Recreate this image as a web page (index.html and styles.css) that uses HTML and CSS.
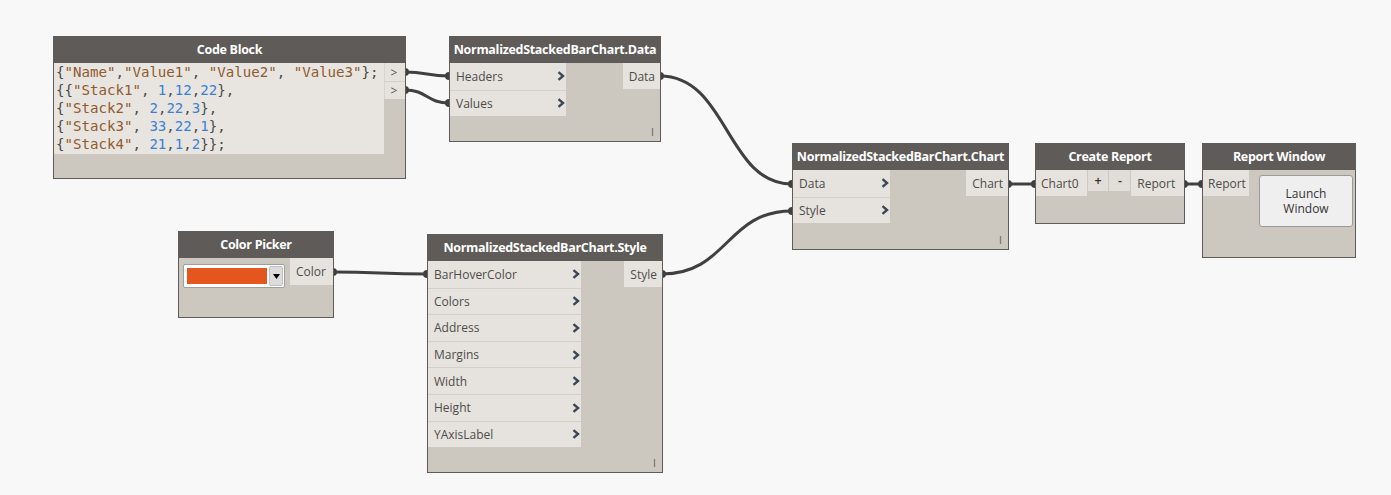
FILE: index.html
```html
<!DOCTYPE html>
<html>
<head>
<meta charset="utf-8">
<title>Dynamo graph</title>
<link rel="stylesheet" href="styles.css">
</head>
<body>
<div class="canvas">
  <svg class="wires" width="1391" height="495" viewBox="0 0 1391 495">
    <g fill="none" stroke="#404040" stroke-width="3" stroke-linecap="round">
      <path d="M405,72 C427,72 427,76 449,76"/>
      <path d="M405,90 C427,90 427,103 449,103"/>
      <path d="M660,76 C728,76 726,184 792,184"/>
      <path d="M662,274 C728,274 726,211 792,211"/>
      <path d="M333,272 C380,272 380,274 427,274"/>
      <path d="M1008,184 L1035,184"/>
      <path d="M1184,184 L1202,184"/>
    </g>
    <g fill="#404040">
      <circle cx="405" cy="72" r="4"/><circle cx="449" cy="76" r="4"/>
      <circle cx="405" cy="90" r="4"/><circle cx="449" cy="103" r="4"/>
      <circle cx="660" cy="76" r="4"/><circle cx="792" cy="184" r="4"/>
      <circle cx="662" cy="274" r="4"/><circle cx="792" cy="211" r="4"/>
      <circle cx="333" cy="272" r="4"/><circle cx="427" cy="274" r="4"/>
      <circle cx="1008" cy="184" r="4"/><circle cx="1035" cy="184" r="4"/>
      <circle cx="1184" cy="184" r="4"/><circle cx="1202" cy="184" r="4"/>
    </g>
  </svg>

  <!-- Code Block -->
  <div class="node n-code">
    <div class="node-head">Code Block</div>
    <div class="node-body">
      <div class="code-wrap">
        <pre class="code"><span class="p">{</span><span class="s">"Name"</span><span class="p">,</span><span class="s">"Value1"</span><span class="p">, </span><span class="s">"Value2"</span><span class="p">, </span><span class="s">"Value3"</span><span class="p">};</span>
<span class="p">{{</span><span class="s">"Stack1"</span><span class="p">, </span><span class="n">1</span><span class="p">,</span><span class="n">12</span><span class="p">,</span><span class="n">22</span><span class="p">},</span>
<span class="p">{</span><span class="s">"Stack2"</span><span class="p">, </span><span class="n">2</span><span class="p">,</span><span class="n">22</span><span class="p">,</span><span class="n">3</span><span class="p">},</span>
<span class="p">{</span><span class="s">"Stack3"</span><span class="p">, </span><span class="n">33</span><span class="p">,</span><span class="n">22</span><span class="p">,</span><span class="n">1</span><span class="p">},</span>
<span class="p">{</span><span class="s">"Stack4"</span><span class="p">, </span><span class="n">21</span><span class="p">,</span><span class="n">1</span><span class="p">,</span><span class="n">2</span><span class="p">}};</span></pre>
        <div class="code-ports">
          <div class="code-port">&gt;</div>
          <div class="code-port">&gt;</div>
        </div>
      </div>
    </div>
  </div>

  <!-- Data -->
  <div class="node n-data">
    <div class="node-head">NormalizedStackedBarChart.Data</div>
    <div class="node-body">
      <div class="inputs w-data">
        <div class="port-in"><span>Headers</span><svg class="chev" width="8" height="10" viewBox="0 0 8 10"><path d="M1.5 1.2 L6 5 L1.5 8.8"/></svg></div>
        <div class="port-in"><span>Values</span><svg class="chev" width="8" height="10" viewBox="0 0 8 10"><path d="M1.5 1.2 L6 5 L1.5 8.8"/></svg></div>
      </div>
      <div class="port-out">Data</div>
      <span class="lacing">I</span>
    </div>
  </div>

  <!-- Color Picker -->
  <div class="node n-color">
    <div class="node-head">Color Picker</div>
    <div class="node-body">
      <div class="picker">
        <div class="swatch"></div>
        <div class="dd-btn"><svg width="7" height="5" viewBox="0 0 7 5"><path d="M0 0 L7 0 L3.5 5 Z" fill="#000"/></svg></div>
      </div>
      <div class="port-out po-color">Color</div>
    </div>
  </div>

  <!-- Style -->
  <div class="node n-style">
    <div class="node-head">NormalizedStackedBarChart.Style</div>
    <div class="node-body">
      <div class="inputs w-style">
        <div class="port-in"><span>BarHoverColor</span><svg class="chev" width="8" height="10" viewBox="0 0 8 10"><path d="M1.5 1.2 L6 5 L1.5 8.8"/></svg></div>
        <div class="port-in"><span>Colors</span><svg class="chev" width="8" height="10" viewBox="0 0 8 10"><path d="M1.5 1.2 L6 5 L1.5 8.8"/></svg></div>
        <div class="port-in"><span>Address</span><svg class="chev" width="8" height="10" viewBox="0 0 8 10"><path d="M1.5 1.2 L6 5 L1.5 8.8"/></svg></div>
        <div class="port-in"><span>Margins</span><svg class="chev" width="8" height="10" viewBox="0 0 8 10"><path d="M1.5 1.2 L6 5 L1.5 8.8"/></svg></div>
        <div class="port-in"><span>Width</span><svg class="chev" width="8" height="10" viewBox="0 0 8 10"><path d="M1.5 1.2 L6 5 L1.5 8.8"/></svg></div>
        <div class="port-in"><span>Height</span><svg class="chev" width="8" height="10" viewBox="0 0 8 10"><path d="M1.5 1.2 L6 5 L1.5 8.8"/></svg></div>
        <div class="port-in"><span>YAxisLabel</span><svg class="chev" width="8" height="10" viewBox="0 0 8 10"><path d="M1.5 1.2 L6 5 L1.5 8.8"/></svg></div>
      </div>
      <div class="port-out">Style</div>
      <span class="lacing">I</span>
    </div>
  </div>

  <!-- Chart -->
  <div class="node n-chart">
    <div class="node-head">NormalizedStackedBarChart.Chart</div>
    <div class="node-body">
      <div class="inputs w-chart">
        <div class="port-in"><span>Data</span><svg class="chev" width="8" height="10" viewBox="0 0 8 10"><path d="M1.5 1.2 L6 5 L1.5 8.8"/></svg></div>
        <div class="port-in"><span>Style</span><svg class="chev" width="8" height="10" viewBox="0 0 8 10"><path d="M1.5 1.2 L6 5 L1.5 8.8"/></svg></div>
      </div>
      <div class="port-out">Chart</div>
      <span class="lacing">I</span>
    </div>
  </div>

  <!-- Create Report -->
  <div class="node n-report">
    <div class="node-head">Create Report</div>
    <div class="node-body report-body">
      <div class="port-single">Chart0</div>
      <div class="mini-btn">+</div>
      <div class="mini-btn">-</div>
      <div class="port-out po-report">Report</div>
    </div>
  </div>

  <!-- Report Window -->
  <div class="node n-window">
    <div class="node-head">Report Window</div>
    <div class="node-body window-body">
      <div class="port-single ps-window">Report</div>
      <div class="launch">Launch<br>Window</div>
    </div>
  </div>
</div>
</body>
</html>
```

FILE: styles.css
```css
html, body {
  margin: 0;
  padding: 0;
  background: #f8f8f8;
}

.canvas {
  position: relative;
  width: 1391px;
  height: 495px;
  overflow: hidden;
  font-family: "Open Sans", "Noto Sans", sans-serif;
  font-size: 12px;
  color: #4e4c4a;
}

.wires {
  position: absolute;
  left: 0;
  top: 0;
}

.node {
  position: absolute;
  box-sizing: border-box;
  border: 1px solid #5e5b58;
  background: #ccc8c0;
  display: flex;
  flex-direction: column;
}

.node-head {
  height: 26px;
  flex: none;
  background: #5e5b58;
  color: #ffffff;
  font-weight: 700;
  font-size: 12.5px;
  display: flex;
  align-items: center;
  justify-content: center;
  letter-spacing: -0.3px;
  white-space: nowrap;
  padding-bottom: 1px;
  box-sizing: border-box;
}

.node-body {
  position: relative;
  flex: 1;
  display: flex;
  align-items: flex-start;
  justify-content: space-between;
}

/* node placement on the canvas */
.n-code   { left: 53px;   top: 36px;  width: 353px; height: 143px; }
.n-data   { left: 449px;  top: 36px;  width: 212px; height: 106px; }
.n-color  { left: 178px;  top: 231px; width: 156px; height: 87px; }
.n-style  { left: 427px;  top: 234px; width: 236px; height: 239px; }
.n-chart  { left: 792px;  top: 143px; width: 217px; height: 107px; }
.n-report { left: 1035px; top: 143px; width: 150px; height: 81px; }
.n-window { left: 1202px; top: 143px; width: 154px; height: 115px; }

/* input ports */
.inputs {
  display: flex;
  flex-direction: column;
  background: #e6e3de;
}
.w-data  { width: 116px; }
.w-style { width: 153px; }
.w-chart { width: 97px; }

.port-in {
  box-sizing: border-box;
  height: 26.6px;
  display: flex;
  align-items: center;
  justify-content: space-between;
  padding: 0 1px 0 6px;
  border-top: 1px solid #d3cfc9;
}
.port-in:first-child {
  border-top: none;
}

.chev path {
  fill: none;
  stroke: #3c4656;
  stroke-width: 2.4;
}

.port-out {
  box-sizing: border-box;
  height: 26px;
  padding: 0 5px 0 6px;
  background: #e6e3de;
  display: flex;
  align-items: center;
}

.lacing {
  position: absolute;
  right: 6px;
  bottom: 3px;
  font-size: 10px;
  color: #6a6866;
  font-family: "DejaVu Sans", sans-serif;
}

/* code block */
.code-wrap {
  display: flex;
  width: 100%;
}
.code {
  margin: 0;
  width: 330px;
  height: 91px;
  box-sizing: border-box;
  padding: 0 0 0 2px;
  background: #e8e5e0;
  font-family: "DejaVu Sans Mono", "Liberation Mono", monospace;
  font-size: 14.1px;
  line-height: 18px;
  color: #555;
  overflow: hidden;
}
.code .s { color: #8f5a30; }
.code .n { color: #3a7fd8; }
.code .p { color: #4a4a4a; }

.code-ports {
  display: flex;
  flex-direction: column;
  flex: 1;
}
.code-port {
  height: 18px;
  box-sizing: border-box;
  background: #e6e3de;
  border-left: 1px solid #d8d4ce;
  display: flex;
  align-items: center;
  justify-content: center;
  font-size: 12px;
  color: #555;
  padding-right: 2px;
}
.code-port + .code-port {
  border-top: 1px solid #d3cfc9;
}

/* color picker */
.picker {
  margin: 6px 0 0 4px;
  width: 102px;
  height: 24px;
  box-sizing: border-box;
  border: 1px solid #9f9f9f;
  border-radius: 2px;
  background: #ffffff;
  display: flex;
  padding: 3px 1px 3px 3px;
  gap: 2px;
}
.swatch {
  flex: 1;
  background: #e5561f;
}
.dd-btn {
  width: 14px;
  margin: -2px 0;
  box-sizing: border-box;
  background: #dcdcdc;
  border: 1px solid #c2c2c2;
  border-radius: 2px;
  display: flex;
  align-items: center;
  justify-content: center;
}
.po-color {
  width: 43px;
  height: 27px;
}

/* create report */
.report-body {
  justify-content: flex-start;
  gap: 1px;
}
.port-single {
  box-sizing: border-box;
  height: 26px;
  background: #e6e3de;
  display: flex;
  align-items: center;
  padding-left: 5px;
  width: 51px;
}
.mini-btn {
  width: 21px;
  height: 21px;
  background: #e1ded9;
  display: flex;
  align-items: center;
  justify-content: center;
  font-size: 12.5px;
  font-weight: 600;
  color: #333;
}
.po-report {
  width: 53px;
  padding-left: 6px;
}

/* report window */
.window-body {
  justify-content: flex-start;
}
.ps-window {
  width: 46px;
}
.launch {
  box-sizing: border-box;
  margin: 5px 0 0 10px;
  width: 94px;
  height: 52px;
  border: 1px solid #9a9a9a;
  border-radius: 3px;
  background: #efefef;
  display: flex;
  align-items: center;
  justify-content: center;
  text-align: center;
  font-size: 12px;
  line-height: 15px;
  color: #333;
}
```
